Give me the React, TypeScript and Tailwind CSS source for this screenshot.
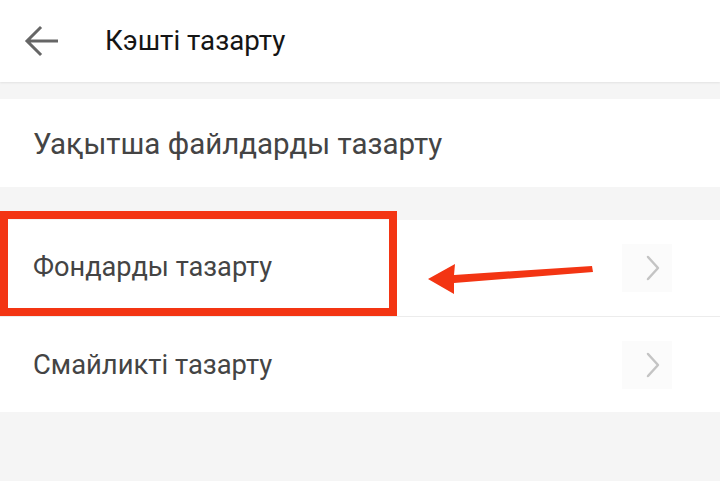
import React from "react";

const Chevron = () => (
  <div className="w-[50px] h-[48px] bg-[#fbfbfb] flex items-center justify-center pl-[12px]">
    <svg width="16" height="28" viewBox="0 0 16 28" fill="none">
      <path d="M3 3 L13 14 L3 25" stroke="#c4c4c4" strokeWidth="2.5" strokeLinecap="round" strokeLinejoin="round" />
    </svg>
  </div>
);

export default function App() {
  return (
    <div
      className="w-[720px] h-[481px] bg-[#f5f5f5] overflow-hidden flex flex-col"
      style={{ fontFamily: "Roboto, 'Noto Sans', sans-serif" }}
    >
      <div className="h-[82px] bg-white flex items-center shrink-0 shadow-[0_1px_2px_rgba(0,0,0,0.08)] relative z-10">
        <div className="w-[105px] flex items-center pl-[24px]">
          <svg width="34" height="32" viewBox="0 0 34 32" fill="none">
            <path d="M33 16 H4 M16 3 L3 16 L16 29" stroke="#666" strokeWidth="3" strokeLinecap="square" />
          </svg>
        </div>
        <span className="text-[27.7px] text-[#151515] leading-none">Кэшті тазарту</span>
      </div>
      <div className="h-[17px] shrink-0" />
      <div className="h-[88px] bg-white flex items-center pl-[33px] shrink-0">
        <span className="text-[29.5px] text-[#444444] leading-none mt-[4px]">Уақытша файлдарды тазарту</span>
      </div>
      <div className="h-[33px] shrink-0" />
      <div className="bg-white flex flex-col shrink-0">
        <div className="h-[96px] flex items-center justify-between pl-[33px] pr-[48px] relative">
          <span className="text-[27.2px] text-[#444444] leading-none">Фондарды тазарту</span>
          <Chevron />
          <div className="absolute left-0 top-[-9px] w-[397px] h-[105px] border-[8px] border-[#f33513]" />
          <svg className="absolute left-[426px] top-[34px]" width="170" height="40" viewBox="0 0 170 40">
            <polygon points="2,25 29,10 28,21 166,12 167,18 28,29 28,40" fill="#f33513" />
          </svg>
        </div>
        <div className="h-px bg-[#ececec]" />
        <div className="h-[95px] flex items-center justify-between pl-[33px] pr-[48px]">
          <span className="text-[27.4px] text-[#444444] leading-none mt-[2px]">Смайликті тазарту</span>
          <Chevron />
        </div>
      </div>
    </div>
  );
}
